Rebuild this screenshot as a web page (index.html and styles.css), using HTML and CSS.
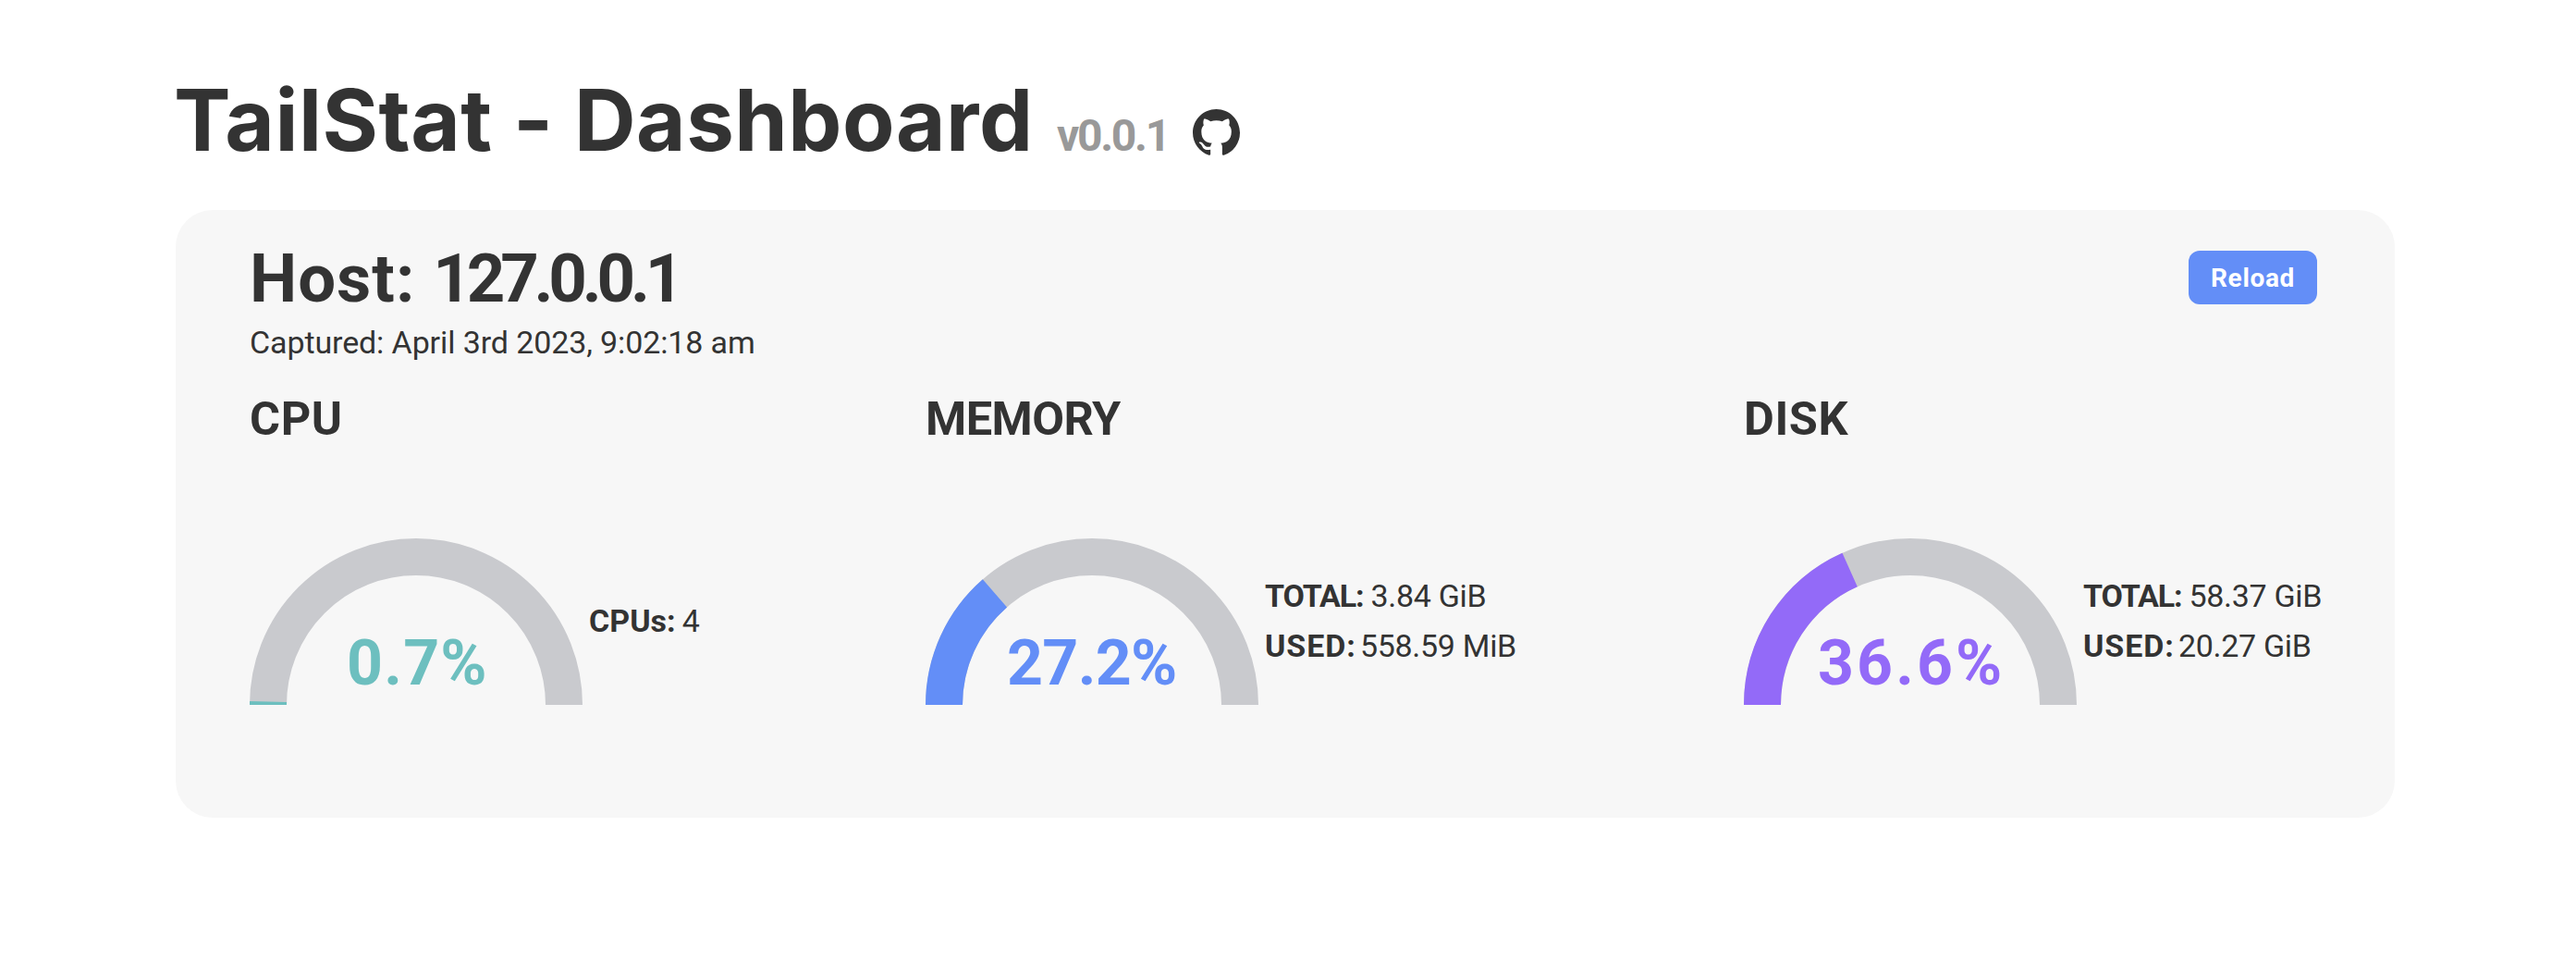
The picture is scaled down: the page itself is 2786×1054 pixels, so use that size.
FILE: index.html
```html
<!DOCTYPE html>
<html lang="en">
<head>
<meta charset="utf-8">
<title>TailStat - Dashboard</title>
<link rel="stylesheet" href="styles.css">
</head>
<body>
<header class="header">
  <h1 class="title">TailStat - Dashboard</h1>
  <span class="version">v0.0.1</span>
  <svg class="github" viewBox="0 0 16 16" role="img" aria-label="GitHub"><path d="M8 0C3.58 0 0 3.58 0 8c0 3.54 2.29 6.53 5.47 7.59.4.07.55-.17.55-.38 0-.19-.01-.82-.01-1.49-2.01.37-2.53-.49-2.69-.94-.09-.23-.48-.94-.82-1.13-.28-.15-.68-.52-.01-.53.63-.01 1.08.58 1.23.82.72 1.21 1.87.87 2.33.66.07-.52.28-.87.51-1.07-1.78-.2-3.64-.89-3.64-3.95 0-.87.31-1.59.82-2.15-.08-.2-.36-1.02.08-2.12 0 0 .67-.21 2.2.82.64-.18 1.32-.27 2-.27s1.36.09 2 .27c1.53-1.04 2.2-.82 2.2-.82.44 1.1.16 1.92.08 2.12.51.56.82 1.27.82 2.15 0 3.07-1.87 3.75-3.65 3.95.29.25.54.73.54 1.48 0 1.07-.01 1.93-.01 2.2 0 .21.15.46.55.38A8.01 8.01 0 0 0 16 8c0-4.42-3.58-8-8-8z"/></svg>
</header>
<main class="card">
  <div class="card-head">
    <div>
      <h2 class="host">Host: <span class="address">127.0.0.1</span></h2>
      <p class="captured">Captured: April 3rd 2023, 9:02:18 am</p>
    </div>
    <button class="reload" type="button">Reload</button>
  </div>
  <div class="metrics">
    <section class="metric cpu">
      <h3 class="name">CPU</h3>
      <div class="body">
        <svg class="gauge" viewBox="0 0 360 180">
          <path class="track" d="M20 180a160 160 0 0 1 320 0"/>
          <path class="value" pathLength="100" stroke-dasharray="0.7 200" d="M20 180a160 160 0 0 1 320 0"/>
          <text class="percent" x="105" y="158">0.7%</text>
        </svg>
        <div class="stats">
          <p class="stat"><b class="label">CPUs:</b><span>4</span></p>
        </div>
      </div>
    </section>
    <section class="metric memory">
      <h3 class="name">MEMORY</h3>
      <div class="body">
        <svg class="gauge" viewBox="0 0 360 180">
          <path class="track" d="M20 180a160 160 0 0 1 320 0"/>
          <path class="value" pathLength="100" stroke-dasharray="27.2 200" d="M20 180a160 160 0 0 1 320 0"/>
          <text class="percent" x="88" y="158">27.2%</text>
        </svg>
        <div class="stats">
          <p class="stat"><b class="label total">TOTAL:</b><span>3.84 GiB</span></p>
          <p class="stat"><b class="label">USED:</b><span>558.59 MiB</span></p>
        </div>
      </div>
    </section>
    <section class="metric disk">
      <h3 class="name">DISK</h3>
      <div class="body">
        <svg class="gauge" viewBox="0 0 360 180">
          <path class="track" d="M20 180a160 160 0 0 1 320 0"/>
          <path class="value" pathLength="100" stroke-dasharray="36.6 200" d="M20 180a160 160 0 0 1 320 0"/>
          <text class="percent" x="80" y="158">36.6%</text>
        </svg>
        <div class="stats">
          <p class="stat"><b class="label total">TOTAL:</b><span>58.37 GiB</span></p>
          <p class="stat"><b class="label">USED:</b><span>20.27 GiB</span></p>
        </div>
      </div>
    </section>
  </div>
</main>
</body>
</html>
```
FILE: styles.css
```css
* { box-sizing: border-box; }
body {
  margin: 0;
  padding: 75px 196px 0 190px;
  background: #fff;
  color: #333;
  font-family: Roboto, "Liberation Sans", sans-serif;
}
h1, h2, h3, p { margin: 0; }

.header { display: flex; align-items: baseline; height: 112px; }
.title { width: 930px; margin-left: -2px; font-family: Inter, Roboto, sans-serif; font-size: 92.3px; line-height: 110px; letter-spacing: 0.5px; white-space: nowrap; }
.version { width: 122px; margin-left: 25px; font-size: 48px; font-weight: 700; line-height: 1; letter-spacing: -2.3px; color: #999; }
.github { align-self: flex-start; width: 51px; height: 51px; margin: 43px 0 0 25px; fill: #333; }

.card { height: 657px; margin-top: 40px; padding: 32px 84px 0 80px; border-radius: 40px; background: #f7f7f7; }
.card-head { display: flex; justify-content: space-between; align-items: flex-start; }
.host { font-size: 72.5px; line-height: 86px; letter-spacing: 1px; }
.address { letter-spacing: -5.2px; }
.captured { font-size: 34px; line-height: 50px; letter-spacing: -0.11px; }
.reload {
  width: 139px;
  height: 58px;
  margin-top: 12px;
  padding: 0;
  border: 0;
  border-radius: 12px;
  background: #638ef7;
  color: #fff;
  font: 700 28px Roboto, "Liberation Sans", sans-serif;
  letter-spacing: 0.65px;
}

.metrics { display: grid; grid-template-columns: 731px 885px 1fr; margin-top: 26px; }
.name { font-size: 50.5px; line-height: 64px; letter-spacing: 0.6px; }
.memory .name { letter-spacing: -0.56px; }
.body { display: flex; align-items: center; gap: 7px; margin-top: 97px; }
.gauge { flex: none; width: 360px; height: 180px; }
.track, .value { fill: none; stroke-width: 40px; }
.track { stroke: #c9cace; }
.percent { font-size: 68px; font-weight: 700; }
.cpu .value { stroke: #6dbfbf; }
.cpu .percent { fill: #6dbfbf; letter-spacing: 1.2px; }
.memory .value { stroke: #638ef7; }
.memory .percent { fill: #638ef7; letter-spacing: -0.69px; }
.disk .value { stroke: #936af8; }
.disk .percent { fill: #936af8; letter-spacing: 3.06px; }

.stats { padding-bottom: 3px; white-space: nowrap; }
.stat { font-size: 34px; line-height: 54px; letter-spacing: -0.3px; }
.label { margin-right: 4px; letter-spacing: 0.95px; }
.cpu .label { margin-right: 7px; letter-spacing: 0; }
.total { margin-right: 8px; letter-spacing: -1.1px; }
```
